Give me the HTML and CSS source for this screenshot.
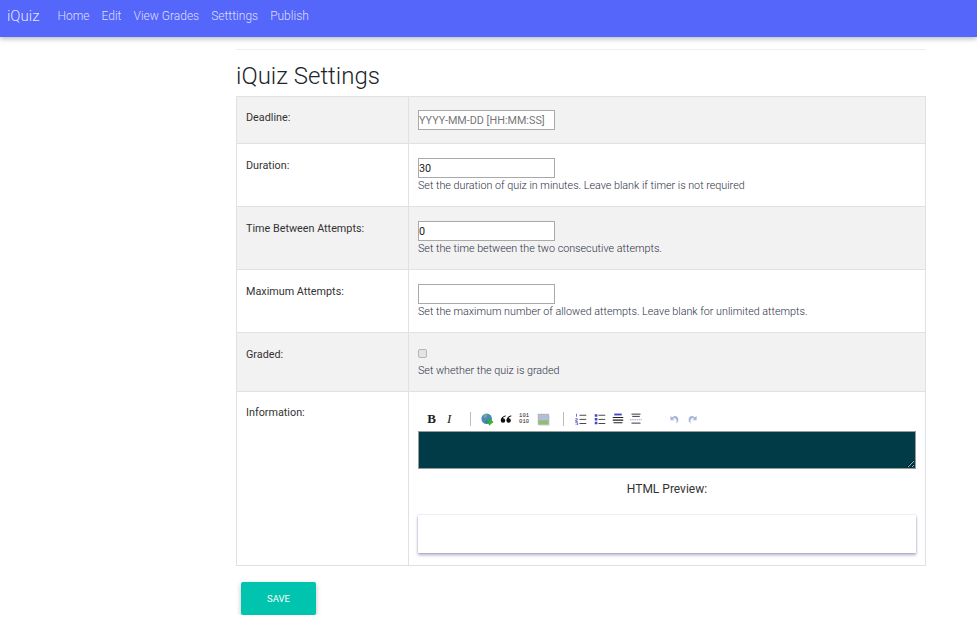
FILE: index.html
```html
<!DOCTYPE html>
<html>

<head>
  <meta charset="utf-8">
  <title>iQuiz Settings</title>
  <link rel="stylesheet" href="styles.css">
</head>

<body>
  <nav class="navbar">
    <a class="brand" href="#">iQuiz</a>
    <a href="#">Home</a>
    <a href="#">Edit</a>
    <a href="#">View Grades</a>
    <a href="#">Setttings</a>
    <a href="#">Publish</a>
  </nav>

  <div class="content">
    <hr class="rule">
    <h1>iQuiz Settings</h1>
    <table class="settings">
      <tr class="row-deadline">
        <th>Deadline:</th>
        <td><input type="text" class="field" placeholder="YYYY-MM-DD [HH:MM:SS]"></td>
      </tr>
      <tr class="row-field">
        <th>Duration:</th>
        <td>
          <input type="text" class="field" value="30">
          <p class="help">Set the duration of quiz in minutes. Leave blank if timer is not required</p>
        </td>
      </tr>
      <tr class="row-field">
        <th>Time Between Attempts:</th>
        <td>
          <input type="text" class="field" value="0">
          <p class="help">Set the time between the two consecutive attempts.</p>
        </td>
      </tr>
      <tr class="row-field">
        <th>Maximum Attempts:</th>
        <td>
          <input type="text" class="field">
          <p class="help">Set the maximum number of allowed attempts. Leave blank for unlimited attempts.</p>
        </td>
      </tr>
      <tr class="row-graded">
        <th>Graded:</th>
        <td>
          <span class="check"></span>
          <p class="help">Set whether the quiz is graded</p>
        </td>
      </tr>
      <tr class="row-info">
        <th>Information:</th>
        <td>
          <div class="toolbar">
            <span class="tool tool-b">B</span>
            <span class="tool tool-i">I</span>
            <span class="sep"></span>
            <span class="tool">
              <svg class="icon icon-wide" viewBox="0 0 16 16">
                <circle cx="7" cy="7" r="6.500" fill="#4a86c8"/>
                <path d="M3 3l3-2 2 1-1 3-3 2zM8 8l3-1 2 2-3 2z" fill="#7cb06a"/>
                <path d="M6 10h4V7l5 4-5 4v-3H6z" fill="#2fc42f" stroke="#1c7a1c" stroke-width=".6"/>
              </svg>
            </span>
            <span class="tool">
              <svg class="icon" viewBox="0 0 16 16">
                <path d="M7.500 3C3.500 4.500 1 6.500 1 10a3 3 0 1 0 3-3c0-1 1.200-2 3.500-2.500zM15 3C11 4.500 8.500 6.500 8.500 10a3 3 0 1 0 3-3c0-1 1.200-2 3.500-2.500z" fill="#111"/>
              </svg>
            </span>
            <span class="tool tool-code">101<br>010</span>
            <span class="tool tool-image">
              <svg class="icon icon-wide" viewBox="0 0 16 16">
                <rect x="1.500" y="1.500" width="12.500" height="12.500" fill="#b0bedc" stroke="#aaa"/>
                <rect x="2" y="9" width="11.500" height="4.500" fill="#8cc06a"/>
                <path d="M15.500 3v12.500H3" fill="none" stroke="#ddd"/>
              </svg>
            </span>
            <span class="sep sep-lists"></span>
            <span class="tool">
              <svg class="icon" viewBox="0 0 16 16">
                <path d="M2 1v4M.500 7.500h2.500v2H1v2h2.500M.500 13h3v3h-3" fill="none" stroke="#4444c4"/>
                <path d="M6 3h9M6 8.500h9M6 14h9" stroke="#444" stroke-width="1.300"/>
              </svg>
            </span>
            <span class="tool">
              <svg class="icon" viewBox="0 0 16 16">
                <path d="M1 1.500h3.500V5H1zM1 6.500h3.500V10H1zM1 11.500h3.500V15H1z" fill="#4444c4"/>
                <path d="M6 3h9M6 8.500h9M6 14h9" stroke="#444" stroke-width="1.300"/>
              </svg>
            </span>
            <span class="tool">
              <svg class="icon" viewBox="0 0 16 16">
                <path d="M3 2h10" stroke="#4444c4" stroke-width="2.500"/>
                <path d="M1 6h14M1 9.500h14M2 13h12" stroke="#222" stroke-width="1.400"/>
              </svg>
            </span>
            <span class="tool">
              <svg class="icon" viewBox="0 0 16 16">
                <path d="M2 1.500h12M3 4.500h10M2 13.500h12" stroke="#333" stroke-width="1.300"/>
                <path d="M0 9h16" stroke="#7a7ac8" stroke-dasharray="2 1"/>
              </svg>
            </span>
            <span class="gap"></span>
            <span class="tool">
              <svg class="icon icon-small" viewBox="0 0 16 16">
                <path d="M2 3v6h6L5.800 6.800C8 5.500 11 6.500 11 11c0 1-.300 2-1 3 3.500-2 4-5 3.500-7C13 4 10.500 2.500 8 3c-1 .2-2 .7-3.500 1.800z" fill="#a8b8d8"/>
              </svg>
            </span>
            <span class="tool">
              <svg class="icon icon-small" viewBox="0 0 16 16">
                <path d="M14 3v6H8l2.200-2.200C8 5.500 5 6.500 5 11c0 1 .3 2 1 3-3.500-2-4-5-3.500-7C3 4 5.500 2.500 8 3c1 .2 2 .7 3.500 1.800z" fill="#a8b8d8"/>
              </svg>
            </span>
          </div>
          <textarea class="editor"></textarea>
          <div class="preview-label">HTML Preview:</div>
          <div class="preview"></div>
        </td>
      </tr>
    </table>
    <button class="save">SAVE</button>
  </div>
</body>

</html>
```

FILE: styles.css
```css
body {
  font-family: Roboto, sans-serif;
  margin: 0;
  padding: 0;
  background-color: #fff;
  color: #212529;
}

.navbar {
  display: flex;
  align-items: center;
  height: 37px;
  padding-bottom: 6px;
  box-sizing: border-box;
  background-color: #5566fb;
  box-shadow: 0 2px 5px rgba(0, 0, 0, 0.26);
}

.navbar a {
  color: rgba(255, 255, 255, 0.8);
  font-size: 12px;
  font-weight: 300;
  text-decoration: none;
  margin-right: 12px;
}

.navbar .brand {
  color: rgba(255, 255, 255, 0.85);
  font-size: 15px;
  margin-left: 7px;
  margin-right: 18px;
}

.content {
  width: 690px;
  margin-left: 236px;
}

.rule {
  border: 0;
  border-top: 1px solid #eee;
  margin: 12px 0 0;
}

h1 {
  font-size: 24px;
  font-weight: 300;
  line-height: 30px;
  margin: 11px 0 5px;
}

.settings {
  width: 690px;
  table-layout: fixed;
  border-collapse: collapse;
  font-size: 10.800px;
}

.settings th,
.settings td {
  border: 1px solid #dee2e6;
  vertical-align: top;
  padding: 9px;
}

.settings th {
  width: 153px;
  text-align: left;
  font-weight: 400;
  color: #333;
  padding-top: 14px;
}

.settings tr:nth-child(odd) {
  background-color: #f2f2f2;
}

.row-deadline {
  height: 47px;
}

.row-field {
  height: 63px;
}

.row-graded {
  height: 59px;
}

.row-info {
  height: 174px;
}

.settings tr.row-field th,
.settings tr.row-graded th {
  padding-top: 15px;
}

.settings td {
  padding-top: 13px;
}

.settings tr.row-field td {
  padding-top: 14px;
}

.field {
  display: block;
  box-sizing: border-box;
  width: 137px;
  height: 20px;
  padding: 1px 0;
  border: 1px solid #a9a9a9;
  background-color: #fff;
  font-family: Roboto, sans-serif;
  font-size: 10.800px;
  color: #222;
}

.field::placeholder {
  color: #777;
}

.help {
  margin: 1px 0 0;
  font-size: 10.750px;
  font-weight: 300;
  line-height: 14px;
  color: #2d3045;
}

.check {
  display: block;
  box-sizing: border-box;
  width: 9px;
  height: 9px;
  margin: 3px 0 0;
  border: 1px solid #b5b5b5;
  border-radius: 2px;
  background-color: #e4e4e4;
}

.row-graded .help {
  margin-top: 6px;
}

.toolbar {
  display: flex;
  align-items: center;
  height: 20px;
  margin-top: 4px;
  padding-left: 4.500px;
}

.tool {
  display: flex;
  flex: none;
  justify-content: center;
  width: 18.400px;
  color: #222;
}

.tool-b {
  font: bold 13px "Liberation Serif", serif;
}

.tool-i {
  font: italic 13px "Liberation Serif", serif;
  transform: translateX(-1px);
}

.tool-code {
  display: block;
  text-align: center;
  font: 5.500px/6px "Liberation Mono", monospace;
}

.tool-image {
  transform: translateX(1px);
}

.sep {
  flex: none;
  width: 1px;
  height: 14px;
  margin: 0 7.500px 0 10.300px;
  background-color: #bbb;
}

.sep-lists {
  margin-left: 11.800px;
}

.icon {
  width: 12px;
  height: 12px;
}

.icon-wide {
  width: 13px;
  height: 13px;
}

.icon-small {
  width: 11px;
  height: 11px;
}

.gap {
  flex: none;
  width: 19.500px;
}

.editor {
  display: block;
  box-sizing: border-box;
  width: 498px;
  height: 38px;
  margin: 2px 0 0;
  border: 1px solid #9a9a9a;
  background-color: #013b47;
  color: #fff;
}

.preview-label {
  margin-top: 13px;
  text-align: center;
  font-size: 12px;
  line-height: 15px;
  color: #333;
}

.preview {
  width: 498px;
  height: 38px;
  margin-top: 18px;
  background-color: #fff;
  box-shadow: 0 2px 3px rgba(50, 50, 110, 0.4), 0 0 1px rgba(50, 50, 110, 0.35);
}

.save {
  display: block;
  width: 75px;
  height: 33px;
  margin: 16px 0 0 5px;
  padding: 0;
  border: none;
  border-radius: 2px;
  background-color: #00c4ae;
  color: #fff;
  font-family: Roboto, sans-serif;
  font-size: 9.500px;
  box-shadow: 0 2px 5px rgba(0, 0, 0, 0.26);
}
```
